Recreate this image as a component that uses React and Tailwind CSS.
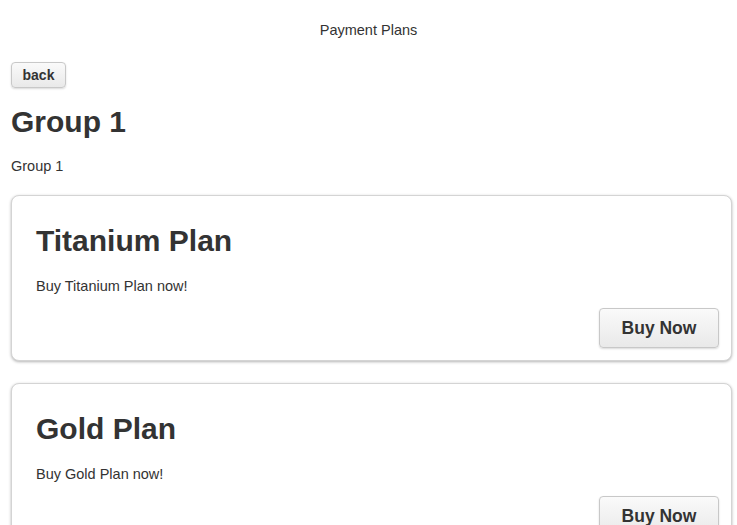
const plans = [
  { name: 'Titanium Plan', blurb: 'Buy Titanium Plan now!' },
  { name: 'Gold Plan', blurb: 'Buy Gold Plan now!' },
]

function PlanCard({ plan }) {
  return (
    <div className="rounded-lg border border-[#d4d4d4] bg-white shadow-[0_1px_3px_rgba(0,0,0,0.3)] pl-6 pr-3 pt-[17px] pb-3">
      <h2 className="text-[30px] font-bold leading-[56px] text-[#333]">{plan.name}</h2>
      <p className="mt-[7px] text-[14.5px] leading-[20px] text-[#333]">{plan.blurb}</p>
      <div className="mt-[12px] flex justify-end">
        <button
          type="button"
          className="h-10 w-[120px] rounded-[4px] border border-[#c8c8c8] bg-gradient-to-b from-[#fafafa] to-[#e9e9e9] text-[17.5px] font-bold text-[#333] shadow-[0_1px_2px_rgba(0,0,0,0.15)]"
        >
          Buy Now
        </button>
      </div>
    </div>
  )
}

export default function App() {
  return (
    <div className="min-h-screen bg-white text-[#333]" style={{ fontFamily: '"Liberation Sans", Arial, sans-serif' }}>
      <div className="h-[58px] pt-[4px] flex items-center justify-center">
        <span className="text-[14.5px] text-[#333]">Payment Plans</span>
      </div>
      <div className="pl-[11px] pr-[5px]">
        <button
          type="button"
          className="mt-[4px] h-[26px] w-[55px] rounded-[4px] border border-[#c8c8c8] bg-gradient-to-b from-[#fafafa] to-[#e9e9e9] text-[14px] font-bold text-[#333] shadow-[0_1px_2px_rgba(0,0,0,0.15)]"
        >
          back
        </button>
        <h1 className="mt-[14px] text-[30px] font-bold leading-[40px]">Group 1</h1>
        <p className="mt-[14px] text-[14.5px] leading-[20px]">Group 1</p>
        <div className="mt-[19px] flex flex-col gap-[22px]">
          {plans.map((p) => (
            <PlanCard key={p.name} plan={p} />
          ))}
        </div>
      </div>
    </div>
  )
}
